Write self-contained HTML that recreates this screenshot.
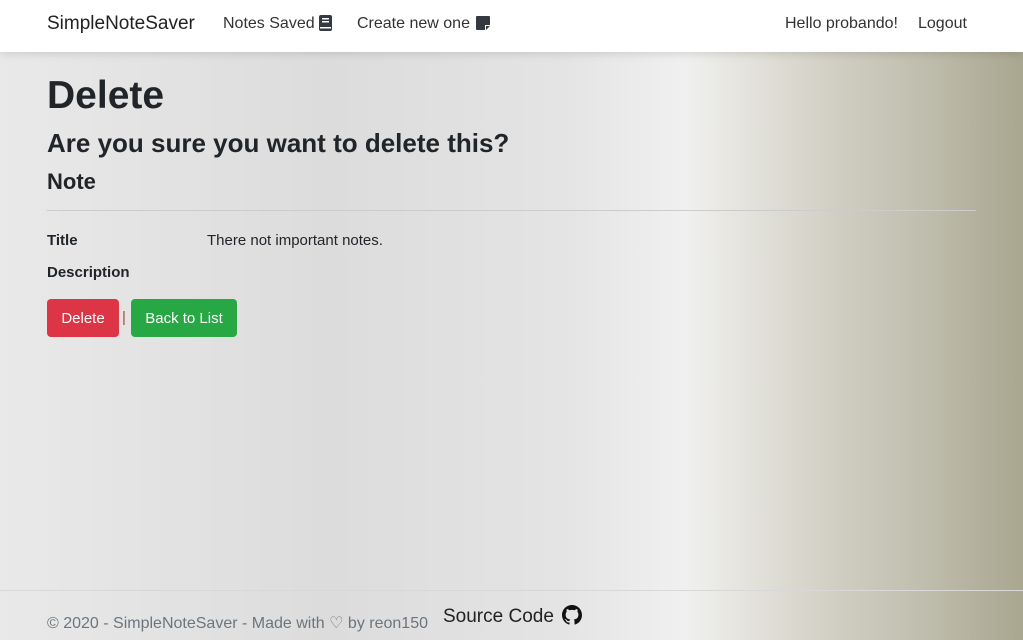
<!DOCTYPE html>
<html><head><meta charset="utf-8"><style>
*{margin:0;padding:0;box-sizing:border-box}
body{width:1023px;height:640px;overflow:hidden;font-family:"Liberation Sans",sans-serif;color:#212529;
background:linear-gradient(90deg,#e9e9e9 0%,#dcdcdc 32%,#e4e4e4 55%,#f0f0f0 67%,#e6e5df 72%,#d0cec2 82%,#c0beae 90%,#a9a78f 100%);position:relative}
.nav{position:absolute;top:0;left:0;width:1023px;height:52px;background:#fff;box-shadow:0 2px 8px rgba(0,0,0,.12)}
.nav span{position:absolute;top:15px;font-size:16px;color:#333}
.brand{left:47px;font-size:19px!important;top:13px!important;color:#222!important}
h1{position:absolute;left:47px;top:74px;font-size:39px;font-weight:bold}
h2{position:absolute;left:47px;top:128px;font-size:26px;font-weight:bold}
h4{position:absolute;left:47px;top:169px;font-size:22px;font-weight:bold}
hr{position:absolute;left:47px;top:210px;width:929px;border:0;border-top:1px solid #ccc}
.t{position:absolute;font-size:15px}
.b{font-weight:bold}
.btn{position:absolute;top:299px;height:38px;border-radius:4px;color:#fff;font-size:15px;line-height:40px;text-align:center}
.foot{position:absolute;top:590px;left:0;width:1023px;border-top:1px solid #d8d8d8}
</style></head><body>
<div class="nav">
<span class="brand">SimpleNoteSaver</span>
<span style="left:223px">Notes Saved</span>
<svg style="position:absolute;left:319px;top:15px" width="13" height="16" viewBox="0 0 13 16"><rect x="0" y="0" width="13" height="16" rx="2" fill="#343a40"/><rect x="3" y="3" width="7" height="1.5" fill="#fff"/><rect x="3" y="6" width="7" height="1.5" fill="#fff"/><rect x="1" y="12" width="11" height="1.5" fill="#fff"/></svg>
<span style="left:357px">Create new one</span>
<svg style="position:absolute;left:476px;top:16px" width="14" height="14" viewBox="0 0 14 14"><path d="M0 1a1 1 0 0 1 1-1h12a1 1 0 0 1 1 1v8h-5v5H1a1 1 0 0 1-1-1z M10 10h4l-4 4z" fill="#343a40"/></svg>
<span style="left:785px">Hello probando!</span>
<span style="left:918px">Logout</span>
</div>
<h1>Delete</h1>
<h2>Are you sure you want to delete this?</h2>
<h4>Note</h4>
<hr>
<div class="t b" style="left:47px;top:232px">Title</div>
<div class="t" style="left:207px;top:232px">There not important notes.</div>
<div class="t b" style="left:47px;top:264px">Description</div>
<div class="btn" style="left:47px;width:72px;background:#dc3545">Delete</div>
<div class="t" style="left:122px;top:309px;color:#a0522d">|</div>
<div class="btn" style="left:131px;width:106px;background:#28a745">Back to List</div>
<div class="foot"></div>
<div class="t" style="left:47px;top:613px;font-size:16px;color:#6c757d">© 2020 - SimpleNoteSaver - Made with ♡ by reon150</div>
<div class="t" style="left:443px;top:606px;font-size:19px;color:#222">Source Code</div>
<svg style="position:absolute;left:562px;top:605px" width="20" height="20" viewBox="0 0 16 16"><path fill="#111" d="M8 0C3.580 0 0 3.580 0 8c0 3.54 2.29 6.53 5.47 7.59.4.07.55-.17.55-.38v-1.33c-2.22.48-2.690-1.070-2.690-1.070-.36-.92-.89-1.170-.89-1.170-.73-.5.06-.49.06-.49.8.06 1.230.83 1.230.83.71 1.220 1.870.87 2.330.66.07-.52.28-.87.51-1.070-1.780-.2-3.640-.89-3.640-3.950 0-.87.31-1.590.82-2.150-.08-.2-.36-1.020.08-2.120 0 0 .67-.21 2.200.82.64-.18 1.320-.27 2-.27s1.360.09 2 .27c1.530-1.040 2.200-.82 2.200-.82.44 1.100.16 1.920.08 2.120.51.56.82 1.270.82 2.150 0 3.070-1.870 3.750-3.650 3.950.29.25.54.73.54 1.480v2.200c0 .21.15.46.55.38A8.010 8.010 0 0 0 16 8c0-4.420-3.580-8-8-8z"/></svg>
</body></html>
